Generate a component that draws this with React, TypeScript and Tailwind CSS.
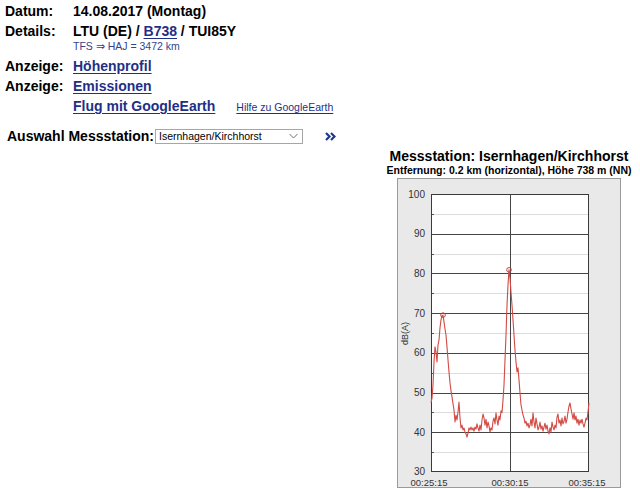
import React from "react";

// Measured noise level (dB(A)) per pixel column, 00:25:15 – 00:35:15
const LEVELS: number[] = [
  47.4, 48.6, 51.9, 57.7, 61.5, 60.2, 57.7, 62.0, 63.2, 66.3,
  68.3, 69.3, 69.5, 67.8, 66.0, 64.5, 61.5, 58.2, 55.2, 52.4,
  50.5, 48.9, 47.2, 45.6, 42.6, 44.3, 43.1, 45.1, 47.6, 43.6,
  41.1, 41.8, 40.6, 41.1, 40.1, 39.6, 38.8, 39.8, 41.1, 40.6,
  41.3, 40.6, 41.1, 40.3, 41.3, 40.8, 42.1, 41.1, 40.3, 41.8,
  40.6, 43.1, 44.6, 43.6, 41.8, 43.3, 41.1, 42.6, 41.6, 40.1,
  41.1, 40.6, 42.8, 43.6, 42.1, 44.9, 43.1, 41.8, 44.1, 43.1,
  45.4, 44.9, 48.1, 51.9, 58.2, 64.5, 72.0, 77.1, 80.9, 78.8,
  75.3, 72.0, 68.3, 64.5, 60.7, 57.7, 55.2, 56.2, 53.2, 49.9,
  46.9, 45.6, 44.4, 43.6, 42.3, 42.8, 41.6, 42.3, 41.1, 41.8,
  43.3, 41.6, 44.9, 42.6, 41.1, 43.6, 42.1, 40.6, 41.3, 42.6,
  40.8, 41.6, 40.3, 41.3, 42.3, 40.8, 41.8, 40.3, 39.6, 41.1,
  40.1, 42.6, 41.3, 40.6, 41.8, 41.1, 43.8, 44.6, 42.3, 43.1,
  41.6, 43.6, 42.1, 42.8, 44.1, 42.3, 43.3, 45.1, 46.6, 47.4,
  45.9, 44.6, 43.3, 44.9, 43.1, 44.1, 42.3, 43.3, 41.8, 43.1,
  42.3, 43.3, 42.1, 41.3, 42.3, 43.6, 43.1, 45.1, 47.4,
];

const PLOT_L = 34;
const PLOT_R = 192;
const PLOT_T = 16;
const PLOT_B = 294;
const DB_MIN = 30;
const DB_MAX = 100;

const yOf = (db: number) =>
  PLOT_B - ((db - DB_MIN) / (DB_MAX - DB_MIN)) * (PLOT_B - PLOT_T);

function NoiseChart() {
  const majors = [40, 50, 60, 70, 80, 90];
  const minors = [35, 45, 55, 65, 75, 85, 95];
  const labels = [100, 90, 80, 70, 60, 50, 40];
  const mid = Math.round((PLOT_L + PLOT_R) / 2);
  const pts = LEVELS.map((v, i) => `${PLOT_L + i},${yOf(v).toFixed(1)}`).join(" ");
  const peaks = [12, 78];

  return (
    <svg width="224" height="310" viewBox="0 0 224 310" className="block">
      <rect x="0.5" y="0.5" width="223" height="309" fill="#e9e9e9" stroke="#9a9a9a" />
      <rect x={PLOT_L} y={PLOT_T} width={PLOT_R - PLOT_L} height={PLOT_B - PLOT_T} fill="#ffffff" />
      {minors.map((d) => (
        <g key={d}>
          <line x1={PLOT_L} x2={PLOT_R} y1={Math.round(yOf(d)) + 0.5} y2={Math.round(yOf(d)) + 0.5} stroke="#dcdcdc" />
          <line x1={PLOT_L} x2={PLOT_L + 3} y1={Math.round(yOf(d)) + 0.5} y2={Math.round(yOf(d)) + 0.5} stroke="#555" />
        </g>
      ))}
      {majors.map((d) => (
        <line key={d} x1={PLOT_L} x2={PLOT_R} y1={Math.round(yOf(d)) + 0.5} y2={Math.round(yOf(d)) + 0.5} stroke="#454545" />
      ))}
      <line x1={mid + 0.5} x2={mid + 0.5} y1={PLOT_T} y2={PLOT_B} stroke="#454545" />
      <rect x={PLOT_L + 0.5} y={PLOT_T + 0.5} width={PLOT_R - PLOT_L - 1} height={PLOT_B - PLOT_T - 1} fill="none" stroke="#3a3a3a" />

      <polyline points={pts} fill="none" stroke="#d24a44" strokeWidth="1.1" strokeLinejoin="round" />
      {peaks.map((i) => (
        <circle key={i} cx={PLOT_L + i} cy={yOf(LEVELS[i])} r="2.3" fill="none" stroke="#c8403c" strokeWidth="1" />
      ))}

      <g fontFamily="'Liberation Sans', Arial, sans-serif" fontSize="10" fill="#333">
        {labels.map((d) => (
          <text key={d} x="28" y={yOf(d) + 3.5} textAnchor="end">
            {d}
          </text>
        ))}
        <text x="28" y="296.5" textAnchor="end">30</text>
        <g fontSize="9.5">
          <text x={PLOT_L - 2} y="307.5" textAnchor="middle">00:25:15</text>
          <text x={mid} y="307.5" textAnchor="middle">00:30:15</text>
          <text x={PLOT_R - 2} y="307.5" textAnchor="middle">00:35:15</text>
        </g>
        <text x="0" y="0" fontSize="9" textAnchor="middle" transform="translate(11 155.5) rotate(-90)">
          dB(A)
        </text>
      </g>
    </svg>
  );
}

function Row({ label, children }: { label: string; children: React.ReactNode }) {
  return (
    <div className="flex">
      <div className="w-[68px] shrink-0">{label}</div>
      <div>{children}</div>
    </div>
  );
}

export default function App() {
  const link = "text-[#1f2f86] underline underline-offset-[2px]";
  return (
    <div className="w-[640px] h-[489px] overflow-hidden bg-white text-black font-['Liberation_Sans',Arial,sans-serif]">
      <div className="pl-[5px] pt-[1px] text-[14px] leading-[20px] font-bold">
        <Row label="Datum:">14.08.2017 (Montag)</Row>
        <Row label="Details:">
          <div>
            LTU (DE) / <a className={link} href="#">B738</a> / TUI85Y
          </div>
          <div className="mt-[-1px] text-[10.5px] leading-[12px] font-normal text-[#34438a]">
            TFS &rArr; HAJ = 3472 km
          </div>
        </Row>
        <div className="mt-[4px]">
          <Row label="Anzeige:">
            <a className={link} href="#">Höhenprofil</a>
          </Row>
        </div>
        <Row label="Anzeige:">
          <a className={link} href="#">Emissionen</a>
        </Row>
        <Row label="">
          <div className="flex items-baseline">
            <a className={link} href="#">Flug mit GoogleEarth</a>
            <a className={`ml-[21px] text-[10.5px] font-normal ${link}`} href="#">
              Hilfe zu GoogleEarth
            </a>
          </div>
        </Row>
      </div>

      <div className="mt-[9px] pl-[7px] flex items-center h-[20px] text-[14px] leading-[20px] font-bold">
        <span className="w-[148px] shrink-0">Auswahl Messstation:</span>
        <div className="relative w-[148px] h-[15px] border border-[#a6a6a6] bg-white">
          <div className="pl-[3px] text-[10.5px] leading-[13px] font-normal text-black">Isernhagen/Kirchhorst</div>
          <svg className="absolute right-[4px] top-[3px]" width="9" height="7" viewBox="0 0 9 7">
            <polyline points="0.5,1 4.5,5 8.5,1" fill="none" stroke="#6e6e6e" strokeWidth="1" />
          </svg>
        </div>
        <svg className="ml-[22px]" width="11" height="9" viewBox="0 0 11 9">
          <polyline points="1,1 4.5,4.5 1,8" fill="none" stroke="#1f3a8f" strokeWidth="2.2" />
          <polyline points="6,1 9.5,4.5 6,8" fill="none" stroke="#1f3a8f" strokeWidth="2.2" />
        </svg>
      </div>

      <div className="flex justify-end">
        <div className="w-[262px] flex flex-col items-center">
          <div className="text-[14px] leading-[20px] font-bold whitespace-nowrap">
            Messstation: Isernhagen/Kirchhorst
          </div>
          <div className="mt-[-2px] text-[10.5px] leading-[12px] font-bold whitespace-nowrap">
            Entfernung: 0.2 km (horizontal), Höhe 738 m (NN)
          </div>
          <div className="mt-[2px]">
            <NoiseChart />
          </div>
        </div>
      </div>
    </div>
  );
}
